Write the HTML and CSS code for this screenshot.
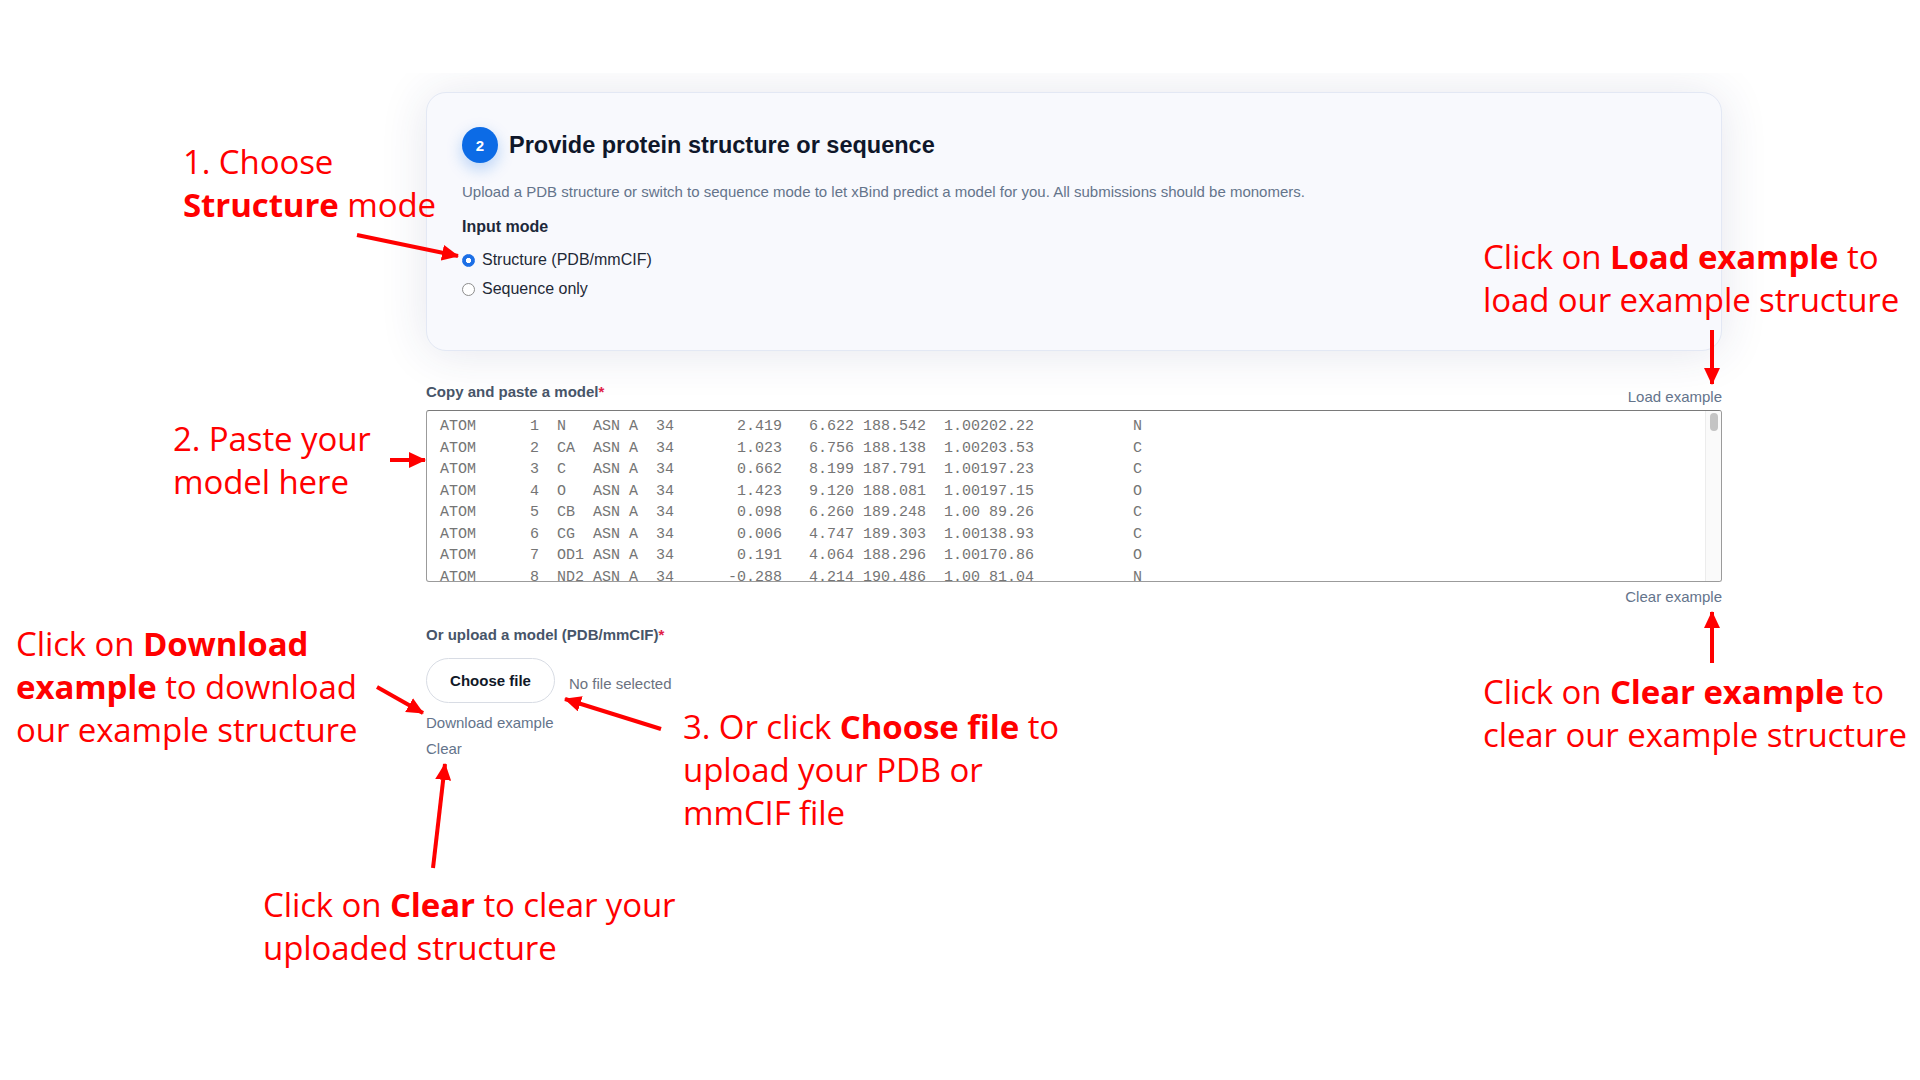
FILE: index.html
```html
<!DOCTYPE html>
<html lang="en">
<head>
<meta charset="utf-8">
<title>Provide protein structure or sequence</title>
<link rel="stylesheet" href="styles.css">
</head>
<body>
<div class="slide">
  <section class="shot">
    <div class="card">
      <div class="card-head">
        <span class="badge">2</span>
        <h2 class="card-title">Provide protein structure or sequence</h2>
      </div>
      <p class="desc">Upload a PDB structure or switch to sequence mode to let xBind predict a model for you. All submissions should be monomers.</p>
      <div class="mode-label">Input mode</div>
      <label class="radio"><input type="radio" name="mode" checked><span>Structure (PDB/mmCIF)</span></label>
      <label class="radio"><input type="radio" name="mode"><span>Sequence only</span></label>
    </div>

    <div class="field-head">
      <span class="field-label">Copy and paste a model<span class="req">*</span></span>
      <a class="link">Load example</a>
    </div>
    <div class="model-box">
<pre class="model-text">ATOM      1  N   ASN A  34       2.419   6.622 188.542  1.00202.22           N
ATOM      2  CA  ASN A  34       1.023   6.756 188.138  1.00203.53           C
ATOM      3  C   ASN A  34       0.662   8.199 187.791  1.00197.23           C
ATOM      4  O   ASN A  34       1.423   9.120 188.081  1.00197.15           O
ATOM      5  CB  ASN A  34       0.098   6.260 189.248  1.00 89.26           C
ATOM      6  CG  ASN A  34       0.006   4.747 189.303  1.00138.93           C
ATOM      7  OD1 ASN A  34       0.191   4.064 188.296  1.00170.86           O
ATOM      8  ND2 ASN A  34      -0.288   4.214 190.486  1.00 81.04           N</pre>
      <div class="scrollbar"><div class="thumb"></div></div>
    </div>
    <div class="right-link"><a class="link">Clear example</a></div>

    <div class="field-label upload-label">Or upload a model (PDB/mmCIF)<span class="req">*</span></div>
    <div class="file-row">
      <button class="file-btn" type="button">Choose file</button>
      <span class="file-status">No file selected</span>
    </div>
    <a class="link block">Download example</a>
    <a class="link block">Clear</a>
  </section>

  <div class="note n1">1. Choose<br><b>Structure</b> mode</div>
  <div class="note n2">2. Paste your<br>model here</div>
  <div class="note n3">Click on <b>Download</b><br><b>example</b> to download<br>our example structure</div>
  <div class="note n4">3. Or click <b>Choose file</b> to<br>upload your PDB or<br>mmCIF file</div>
  <div class="note n5">Click on <b>Clear</b> to clear your<br>uploaded structure</div>
  <div class="note n6">Click on <b>Load example</b> to<br>load our example structure</div>
  <div class="note n7">Click on <b>Clear example</b> to<br>clear our example structure</div>

  <svg class="arrows" width="1920" height="1080" viewBox="0 0 1920 1080" aria-hidden="true">
    <defs>
      <marker id="head" markerUnits="userSpaceOnUse" markerWidth="18" markerHeight="16" refX="16" refY="8" orient="auto">
        <path d="M0 0 L17 8 L0 16 Z" fill="#ff0000"/>
      </marker>
    </defs>
    <g stroke="#ff0000" stroke-width="4" fill="none" marker-end="url(#head)">
      <line x1="357" y1="235" x2="458" y2="256"/>
      <line x1="390" y1="460" x2="425" y2="460"/>
      <line x1="377" y1="687" x2="423" y2="713"/>
      <line x1="661" y1="729" x2="565" y2="699"/>
      <line x1="433" y1="868" x2="445" y2="764"/>
      <line x1="1712" y1="330" x2="1712" y2="384"/>
      <line x1="1712" y1="663" x2="1712" y2="612"/>
    </g>
  </svg>
</div>
</body>
</html>
```

FILE: styles.css
```css
* { box-sizing: border-box; }

html, body {
  margin: 0;
  padding: 0;
  background: #ffffff;
}

.slide {
  position: relative;
  width: 1920px;
  height: 1080px;
  overflow: hidden;
  background: #ffffff;
  font-family: "Liberation Sans", Arial, sans-serif;
}

/* pasted screenshot region */
.shot {
  width: 1408px;
  height: 700px;
  margin: 73px 0 0 370px;
  padding: 19px 56px 0;
  overflow: hidden;
  display: flex;
  flex-direction: column;
  align-items: stretch;
}
.shot > * { flex-shrink: 0; }

.card {
  height: 259px;
  border: 1px solid #e3e8f4;
  border-radius: 20px;
  background: #f8f9fd;
  box-shadow: 0 2px 48px rgba(40, 52, 110, 0.12);
  padding: 34px 35px 0;
  display: flex;
  flex-direction: column;
  align-items: flex-start;
}

.card-head {
  display: flex;
  align-items: center;
  gap: 11px;
  height: 36px;
}

.badge {
  width: 36px;
  height: 36px;
  border-radius: 50%;
  background: #0c6be6;
  color: #ffffff;
  font-weight: 700;
  font-size: 15px;
  display: flex;
  align-items: center;
  justify-content: center;
  box-shadow: 0 6px 16px rgba(12, 107, 230, 0.28);
}

.card-title {
  margin: 0;
  font-size: 23.5px;
  font-weight: 700;
  color: #0f172a;
}

.desc {
  margin: 19px 0 0;
  font-size: 15px;
  line-height: 20px;
  color: #64748b;
}

.mode-label {
  margin-top: 15px;
  font-size: 16px;
  line-height: 20px;
  font-weight: 700;
  color: #1e293b;
}

.radio {
  display: flex;
  align-items: center;
  gap: 7px;
  height: 22px;
  font-size: 16px;
  color: #1f2937;
  margin-top: 7px;
}
.mode-label + .radio { margin-top: 12px; }

.radio input {
  appearance: none;
  -webkit-appearance: none;
  margin: 0;
  width: 13px;
  height: 13px;
  border-radius: 50%;
  border: 1px solid #8d8d8d;
  background: #ffffff;
}
.radio input:checked {
  border-color: #1c6fe6;
  background: radial-gradient(circle, #ffffff 0 2.4px, #1c6fe6 2.9px);
}

.field-head {
  margin-top: 32px;
  display: flex;
  justify-content: space-between;
  align-items: flex-end;
  height: 23px;
}

.field-label {
  font-size: 15px;
  line-height: 18px;
  font-weight: 700;
  color: #475569;
  padding-bottom: 5px;
}
.req { color: #e11d48; }

.link {
  font-size: 15px;
  line-height: 18px;
  color: #64748b;
  text-decoration: none;
}
.link.block {
  display: block;
  line-height: 26px;
}

.model-box {
  margin-top: 4px;
  height: 172px;
  border: 1px solid #9b9b9b;
  border-top-color: #7a7a7a;
  border-radius: 3px;
  background: #ffffff;
  display: flex;
  overflow: hidden;
}

.model-text {
  flex: 1;
  margin: 0;
  padding: 5px 12px 0 13px;
  overflow: hidden;
  font-family: "Liberation Mono", "Courier New", monospace;
  font-size: 15px;
  line-height: 21.5px;
  color: #757575;
  white-space: pre;
}

.scrollbar {
  width: 16px;
  background: #fafafa;
  border-left: 1px solid #ececec;
  padding: 2px 3px 0 4px;
}
.thumb {
  height: 18px;
  border-radius: 4px;
  background: #c4c4c4;
}

.right-link {
  margin-top: 6px;
  display: flex;
  justify-content: flex-end;
}

.upload-label {
  margin-top: 20px;
  padding-bottom: 0;
}

.file-row {
  margin-top: 14px;
  display: flex;
  align-items: center;
  gap: 14px;
}

.file-btn {
  width: 129px;
  height: 45px;
  border: 1px solid #d8dce4;
  border-radius: 23px;
  background: #ffffff;
  font-family: "Liberation Sans", Arial, sans-serif;
  font-weight: 700;
  font-size: 15px;
  color: #111827;
  padding: 0;
}

.file-status {
  font-size: 15px;
  color: #6b7280;
  padding-top: 5px;
}

.file-row + .link { margin-top: 7px; }

/* red annotations */
.note {
  position: absolute;
  font-family: "Open Sans", "Noto Sans", sans-serif;
  font-size: 33px;
  line-height: 43px;
  color: #ff0000;
  white-space: nowrap;
  letter-spacing: -0.1px;
}
.note b { font-weight: 700; }

.n1 { left: 183px; top: 140px; }
.n2 { left: 173px; top: 417px; }
.n3 { left: 16px;  top: 622px; }
.n4 { left: 683px; top: 705px; }
.n5 { left: 263px; top: 883px; }
.n6 { left: 1483px; top: 235px; }
.n7 { left: 1483px; top: 670px; }

.arrows {
  position: absolute;
  left: 0;
  top: 0;
  pointer-events: none;
}
```
